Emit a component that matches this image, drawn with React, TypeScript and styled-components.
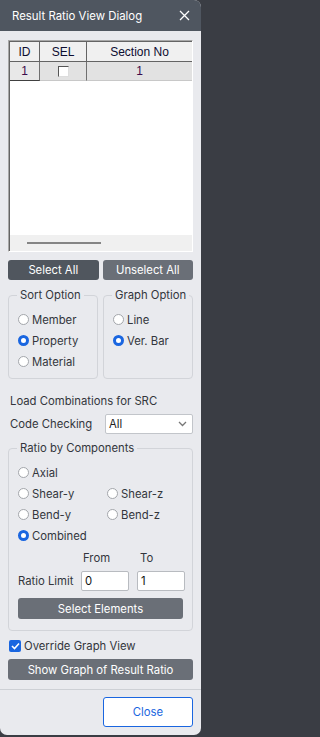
import React from "react";
import styled, { createGlobalStyle } from "styled-components";

const GlobalStyle = createGlobalStyle`
  html, body {
    margin: 0;
    padding: 0;
    background: #3a3d44;
  }
  body {
    font-family: "Inter", "Noto Sans", sans-serif;
    font-size: 11.3px;
    color: #33363c;
  }
`;

const Dialog = styled.div`
  width: 201px;
  height: 735px;
  background: #e9eaee;
  border-radius: 0 7px 7px 7px;
  overflow: hidden;
  display: flex;
  flex-direction: column;
`;

const TitleBar = styled.div`
  height: 31px;
  flex-shrink: 0;
  background: #4f5660;
  color: #fff;
  font-size: 11.4px;
  display: flex;
  align-items: center;
  justify-content: space-between;
  padding: 0 11px 0 12px;
`;

const Body = styled.div`
  padding: 9px 8px 0 8px;
  display: flex;
  flex-direction: column;
`;

const GridFrame = styled.div`
  height: 210px;
  border: 1px solid #a8a8a8;
  border-bottom-color: #fff;
  border-right-color: #fff;
  display: flex;
  flex-direction: column;
`;

const GridInner = styled.div`
  flex: 1;
  border-left: 1px solid #646464;
  border-top: 1px solid #646464;
  background: #fff;
  display: flex;
  flex-direction: column;
  overflow: hidden;
`;

const GridRow = styled.div<{ $h: number }>`
  display: grid;
  grid-template-columns: 30px 47px 1fr;
  height: ${(p) => p.$h}px;
`;

const HeadCell = styled.div`
  background: #f0f0f0;
  border-right: 1px solid #646464;
  border-bottom: 1px solid #646464;
  display: flex;
  align-items: center;
  justify-content: center;
  font-family: "Liberation Sans", Arial, sans-serif;
  font-size: 12px;
  color: #0c0c30;
  &:last-child {
    border-right: none;
  }
`;

const DataCell = styled.div<{ $raised?: boolean }>`
  background: ${(p) => (p.$raised ? "#e8e8e8" : "#e2e2e2")};
  border-right: 1px solid #707070;
  border-bottom: 1px solid ${(p) => (p.$raised ? "#404040" : "#c8c8c8")};
  display: flex;
  align-items: center;
  justify-content: center;
  font-family: "Liberation Sans", Arial, sans-serif;
  font-size: 12px;
  color: #3c0c4c;
  &:last-child {
    border-right: none;
  }
`;

const CellCheck = styled.span`
  width: 11px;
  height: 11px;
  box-sizing: border-box;
  background: #fff;
  border-top: 1px solid #555;
  border-left: 1px solid #555;
  border-right: 1px solid #ddd;
  border-bottom: 1px solid #ddd;
`;

const GridSpace = styled.div`
  flex: 1;
`;

const ScrollStrip = styled.div`
  height: 16px;
  background: #f0f0f0;
  display: flex;
  align-items: center;
  padding-left: 17px;
`;

const ScrollThumb = styled.div`
  width: 74px;
  height: 2px;
  background: #858585;
`;

const ButtonRow = styled.div`
  margin-top: 8px;
  display: grid;
  grid-template-columns: 1fr 1fr;
  gap: 4px;
`;

const DarkButton = styled.button<{ $tone?: "dark" | "mid"; $h?: number }>`
  height: ${(p) => p.$h ?? 20}px;
  border: none;
  border-radius: 3px;
  background: ${(p) => (p.$tone === "dark" ? "#50565e" : "#6a6f77")};
  color: #fff;
  font-family: inherit;
  font-size: 11.3px;
  padding: 0;
  cursor: pointer;
`;

const OptionRow = styled.div`
  margin-top: 8px;
  display: grid;
  grid-template-columns: 1fr 1fr;
  gap: 5px;
`;

const Group = styled.fieldset<{ $h: number }>`
  margin: 0;
  height: ${(p) => p.$h}px;
  box-sizing: border-box;
  border: 1px solid #d2d4d9;
  border-radius: 4px;
  padding: 7px 9px 0 9px;
  min-width: 0;
`;

const Legend = styled.legend`
  padding: 0 3px;
  margin-left: -1px;
  font-size: 11.3px;
  color: #33363c;
  white-space: nowrap;
`;

const RadioList = styled.div`
  display: flex;
  flex-direction: column;
`;

const RadioGrid = styled.div`
  display: grid;
  grid-template-columns: 89px 1fr;
`;

const RadioItem = styled.label`
  height: 21px;
  display: flex;
  align-items: center;
  gap: 3px;
  white-space: nowrap;
`;

const RadioDot = styled.span<{ $on?: boolean }>`
  width: 11px;
  height: 11px;
  box-sizing: border-box;
  border-radius: 50%;
  background: #fff;
  border: ${(p) => (p.$on ? "3px solid #1a66e0" : "1px solid #a3a6ab")};
  flex-shrink: 0;
`;

const Caption = styled.div`
  margin-top: 15px;
  padding-left: 2px;
  height: 14px;
  display: flex;
  align-items: center;
`;

const CodeRow = styled.div`
  margin-top: 6px;
  display: grid;
  grid-template-columns: 95px 1fr;
  align-items: center;
  padding-left: 2px;
`;

const SelectBox = styled.div`
  height: 20px;
  box-sizing: border-box;
  background: #fff;
  border: 1px solid #c2c5ca;
  border-radius: 2px;
  display: flex;
  align-items: center;
  justify-content: space-between;
  padding: 0 5px 0 3px;
  color: #222;
`;

const RatioGroup = styled(Group)`
  margin-top: 7px;
`;

const LimitHead = styled.div`
  display: grid;
  grid-template-columns: 65px 57px 1fr;
  height: 23px;
  align-items: center;
`;

const LimitRow = styled.div`
  display: grid;
  grid-template-columns: 55px 48px 48px;
  column-gap: 8px;
  align-items: center;
  height: 20px;
  margin-top: 2px;
  white-space: nowrap;
`;

const NumberBox = styled.div`
  height: 20px;
  box-sizing: border-box;
  background: #fff;
  border: 1px solid #b8bbc0;
  border-radius: 2px;
  display: flex;
  align-items: center;
  padding-left: 3px;
  color: #111;
`;

const WideButton = styled(DarkButton)`
  width: 100%;
  margin-top: 7px;
`;

const CheckRow = styled.label`
  margin-top: 8px;
  height: 14px;
  display: flex;
  align-items: center;
  gap: 3px;
  padding-left: 1px;
`;

const CheckBox = styled.span`
  width: 12px;
  height: 12px;
  border-radius: 2px;
  background: #1a66e0;
  display: flex;
  align-items: center;
  justify-content: center;
`;

const ShowButton = styled(DarkButton)`
  margin-top: 6px;
`;

const Separator = styled.div`
  margin-top: 9px;
  height: 1px;
  background: #cdd0d5;
`;

const Footer = styled.div`
  display: flex;
  justify-content: flex-end;
  padding: 7px 8px 0 8px;
`;

const CloseButton = styled.button`
  width: 90px;
  height: 30px;
  background: #fff;
  border: 1px solid #1a66e0;
  border-radius: 3px;
  color: #1a66e0;
  font-family: inherit;
  font-size: 11.3px;
  cursor: pointer;
`;

const Radio = ({ label, on }: { label: string; on?: boolean }) => (
  <RadioItem>
    <RadioDot $on={on} />
    {label}
  </RadioItem>
);

export default function App() {
  return (
    <>
      <GlobalStyle />
      <Dialog>
        <TitleBar>
          <span>Result Ratio View Dialog</span>
          <svg width="11" height="11" viewBox="0 0 11 11">
            <path d="M1 1L10 10M10 1L1 10" stroke="#fff" strokeWidth="1.3" />
          </svg>
        </TitleBar>
        <Body>
          <GridFrame>
            <GridInner>
              <GridRow $h={20}>
                <HeadCell>ID</HeadCell>
                <HeadCell>SEL</HeadCell>
                <HeadCell>Section No</HeadCell>
              </GridRow>
              <GridRow $h={19}>
                <DataCell $raised>1</DataCell>
                <DataCell>
                  <CellCheck />
                </DataCell>
                <DataCell>1</DataCell>
              </GridRow>
              <GridSpace />
              <ScrollStrip>
                <ScrollThumb />
              </ScrollStrip>
            </GridInner>
          </GridFrame>

          <ButtonRow>
            <DarkButton $tone="dark">Select All</DarkButton>
            <DarkButton>Unselect All</DarkButton>
          </ButtonRow>

          <OptionRow>
            <Group $h={91}>
              <Legend>Sort Option</Legend>
              <RadioList>
                <Radio label="Member" />
                <Radio label="Property" on />
                <Radio label="Material" />
              </RadioList>
            </Group>
            <Group $h={91}>
              <Legend>Graph Option</Legend>
              <RadioList>
                <Radio label="Line" />
                <Radio label="Ver. Bar" on />
              </RadioList>
            </Group>
          </OptionRow>

          <Caption>Load Combinations for SRC</Caption>
          <CodeRow>
            <span>Code Checking</span>
            <SelectBox>
              <span>All</span>
              <svg width="9" height="6" viewBox="0 0 9 6">
                <path d="M1 1L4.5 4.5L8 1" stroke="#777" strokeWidth="1.3" fill="none" />
              </svg>
            </SelectBox>
          </CodeRow>

          <RatioGroup $h={190}>
            <Legend>Ratio by Components</Legend>
            <RadioList>
              <Radio label="Axial" />
              <RadioGrid>
                <Radio label="Shear-y" />
                <Radio label="Shear-z" />
                <Radio label="Bend-y" />
                <Radio label="Bend-z" />
              </RadioGrid>
              <Radio label="Combined" on />
            </RadioList>
            <LimitHead>
              <span />
              <span>From</span>
              <span>To</span>
            </LimitHead>
            <LimitRow>
              <span>Ratio Limit</span>
              <NumberBox>0</NumberBox>
              <NumberBox>1</NumberBox>
            </LimitRow>
            <WideButton $h={21}>Select Elements</WideButton>
          </RatioGroup>

          <CheckRow>
            <CheckBox>
              <svg width="9" height="8" viewBox="0 0 9 8">
                <path d="M1 4L3.5 6.5L8 1.5" stroke="#fff" strokeWidth="1.6" fill="none" />
              </svg>
            </CheckBox>
            Override Graph View
          </CheckRow>
          <ShowButton $h={21}>Show Graph of Result Ratio</ShowButton>
        </Body>
        <Separator />
        <Footer>
          <CloseButton>Close</CloseButton>
        </Footer>
      </Dialog>
    </>
  );
}
